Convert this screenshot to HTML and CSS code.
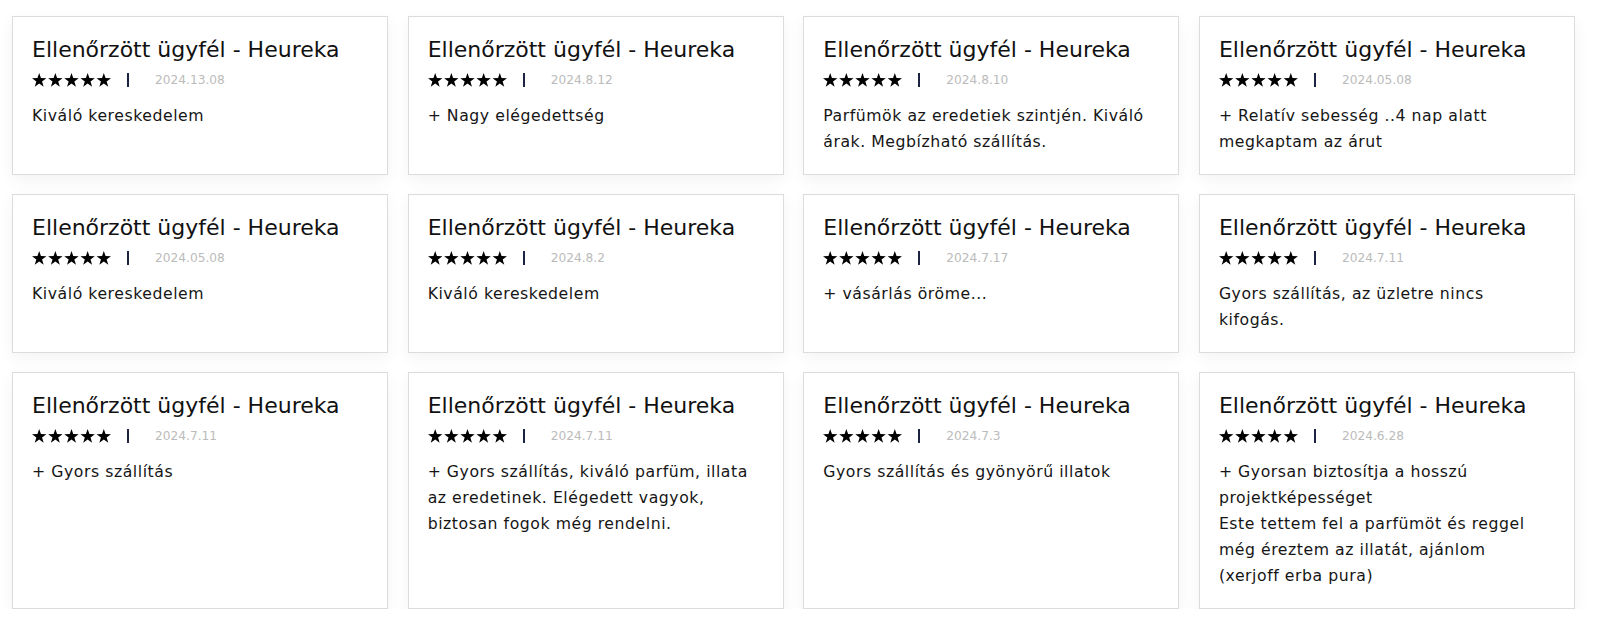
FILE: index.html
```html
<!DOCTYPE html>
<html lang="hu">
<head>
<meta charset="utf-8">
<title>Vélemények</title>
<link rel="stylesheet" href="styles.css">
</head>
<body>
<div class="grid">
  <div class="card"><div class="title">Ellenőrzött ügyfél - Heureka</div><div class="meta"><svg class="stars" viewBox="0 0 79 14"><use href="#s5"/></svg><span class="sep"></span><span class="date">2024.13.08</span></div><div class="text">Kiváló kereskedelem</div></div>
  <div class="card"><div class="title">Ellenőrzött ügyfél - Heureka</div><div class="meta"><svg class="stars" viewBox="0 0 79 14"><use href="#s5"/></svg><span class="sep"></span><span class="date">2024.8.12</span></div><div class="text">+ Nagy elégedettség</div></div>
  <div class="card"><div class="title">Ellenőrzött ügyfél - Heureka</div><div class="meta"><svg class="stars" viewBox="0 0 79 14"><use href="#s5"/></svg><span class="sep"></span><span class="date">2024.8.10</span></div><div class="text">Parfümök az eredetiek szintjén. Kiváló árak. Megbízható szállítás.</div></div>
  <div class="card"><div class="title">Ellenőrzött ügyfél - Heureka</div><div class="meta"><svg class="stars" viewBox="0 0 79 14"><use href="#s5"/></svg><span class="sep"></span><span class="date">2024.05.08</span></div><div class="text">+ Relatív sebesség ..4 nap alatt megkaptam az árut</div></div>

  <div class="card"><div class="title">Ellenőrzött ügyfél - Heureka</div><div class="meta"><svg class="stars" viewBox="0 0 79 14"><use href="#s5"/></svg><span class="sep"></span><span class="date">2024.05.08</span></div><div class="text">Kiváló kereskedelem</div></div>
  <div class="card"><div class="title">Ellenőrzött ügyfél - Heureka</div><div class="meta"><svg class="stars" viewBox="0 0 79 14"><use href="#s5"/></svg><span class="sep"></span><span class="date">2024.8.2</span></div><div class="text">Kiváló kereskedelem</div></div>
  <div class="card"><div class="title">Ellenőrzött ügyfél - Heureka</div><div class="meta"><svg class="stars" viewBox="0 0 79 14"><use href="#s5"/></svg><span class="sep"></span><span class="date">2024.7.17</span></div><div class="text">+ vásárlás öröme...</div></div>
  <div class="card"><div class="title">Ellenőrzött ügyfél - Heureka</div><div class="meta"><svg class="stars" viewBox="0 0 79 14"><use href="#s5"/></svg><span class="sep"></span><span class="date">2024.7.11</span></div><div class="text">Gyors szállítás, az üzletre nincs kifogás.</div></div>

  <div class="card"><div class="title">Ellenőrzött ügyfél - Heureka</div><div class="meta"><svg class="stars" viewBox="0 0 79 14"><use href="#s5"/></svg><span class="sep"></span><span class="date">2024.7.11</span></div><div class="text">+ Gyors szállítás</div></div>
  <div class="card"><div class="title">Ellenőrzött ügyfél - Heureka</div><div class="meta"><svg class="stars" viewBox="0 0 79 14"><use href="#s5"/></svg><span class="sep"></span><span class="date">2024.7.11</span></div><div class="text">+ Gyors szállítás, kiváló parfüm, illata az eredetinek. Elégedett vagyok, biztosan fogok még rendelni.</div></div>
  <div class="card"><div class="title">Ellenőrzött ügyfél - Heureka</div><div class="meta"><svg class="stars" viewBox="0 0 79 14"><use href="#s5"/></svg><span class="sep"></span><span class="date">2024.7.3</span></div><div class="text">Gyors szállítás és gyönyörű illatok</div></div>
  <div class="card"><div class="title">Ellenőrzött ügyfél - Heureka</div><div class="meta"><svg class="stars" viewBox="0 0 79 14"><use href="#s5"/></svg><span class="sep"></span><span class="date">2024.6.28</span></div><div class="text">+ Gyorsan biztosítja a hosszú projektképességet<br>Este tettem fel a parfümöt és reggel még éreztem az illatát, ajánlom (xerjoff erba pura)</div></div>
</div>
<svg class="defs" width="0" height="0" aria-hidden="true">
  <defs>
    <polygon id="st" points="7.2,0 8.95,5.05 14.4,5.2 10.05,8.45 11.65,13.8 7.2,10.6 2.75,13.8 4.35,8.45 0,5.2 5.45,5.05"/>
    <g id="s5" fill="#000">
      <use href="#st" x="0"/>
      <use href="#st" x="16.15"/>
      <use href="#st" x="32.3"/>
      <use href="#st" x="48.45"/>
      <use href="#st" x="64.6"/>
    </g>
  </defs>
</svg>
</body>
</html>
```

FILE: styles.css
```css
* { box-sizing: border-box; }
html, body { margin: 0; background: #fff; }
body {
  font-family: "DejaVu Sans", "Liberation Sans", sans-serif;
  color: #111;
  padding: 16px 0 0 12px;
}
.defs { position: absolute; width: 0; height: 0; overflow: hidden; }
.grid {
  width: 1563px;
  display: grid;
  grid-template-columns: repeat(4, 1fr);
  column-gap: 19.5px;
  row-gap: 19.5px;
}
.card {
  background: #fff;
  border: 1px solid #dcdcdc;
  box-shadow: 0 5px 15px rgba(0, 0, 0, 0.05);
  padding: 19px 27px 19px 19px;
}
.title {
  font-size: 22px;
  line-height: 28px;
  font-weight: 400;
  color: #111;
  white-space: nowrap;
}
.meta {
  display: flex;
  align-items: center;
  height: 18px;
  margin-top: 7px;
}
.stars {
  width: 79px;
  height: 14px;
  display: block;
}
.sep {
  display: block;
  width: 2px;
  height: 14px;
  background: #1c2342;
  margin-left: 16px;
}
.date {
  margin-left: 26px;
  font-size: 12.2px;
  color: #bbbbbb;
}
.text {
  margin-top: 13.5px;
  font-size: 15.7px;
  letter-spacing: 0.55px;
  line-height: 26px;
  color: #151515;
}
```
